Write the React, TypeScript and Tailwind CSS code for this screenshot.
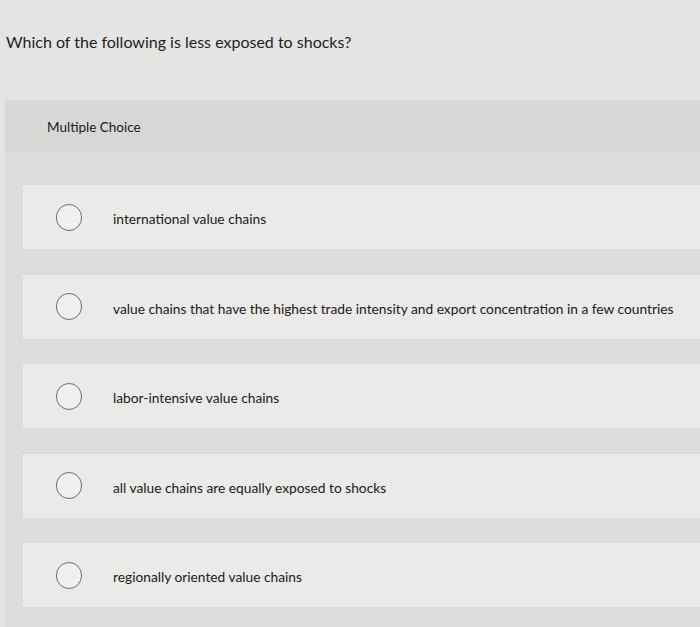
const options = [
  'international value chains',
  'value chains that have the highest trade intensity and export concentration in a few countries',
  'labor-intensive value chains',
  'all value chains are equally exposed to shocks',
  'regionally oriented value chains',
]

export default function App() {
  return (
    <div className="w-[700px] h-[627px] overflow-hidden bg-[#e4e4e2] font-['Lato','Liberation_Sans',sans-serif] text-[#1e1e1e]">
      <p className="pt-[31px] pl-[6px] text-[16px] leading-[22px]">Which of the following is less exposed to shocks?</p>

      <div className="mt-[47px] ml-[5px] bg-[#dcdcda] pb-[20px]">
        <div className="h-[52px] bg-[#d7d7d5] pl-[42px] flex items-center">
          <span className="mt-[2px] text-[13.5px] text-[#1a1a1a]">Multiple Choice</span>
        </div>
        <div className="pt-[33px] pl-[18px] flex flex-col gap-[25.5px]">
          {options.map(o => (
            <div key={o} className="h-[64px] bg-[#eaeae8] flex items-center pl-[33px]">
              <span className="w-[26px] h-[27px] rounded-full border border-[#6e6e6e] bg-[#f0f0ee] shrink-0" />
              <span className="ml-[31px] mt-[5px] text-[13.75px] text-[#1a1a1a] whitespace-nowrap">{o}</span>
            </div>
          ))}
        </div>
      </div>
    </div>
  )
}
